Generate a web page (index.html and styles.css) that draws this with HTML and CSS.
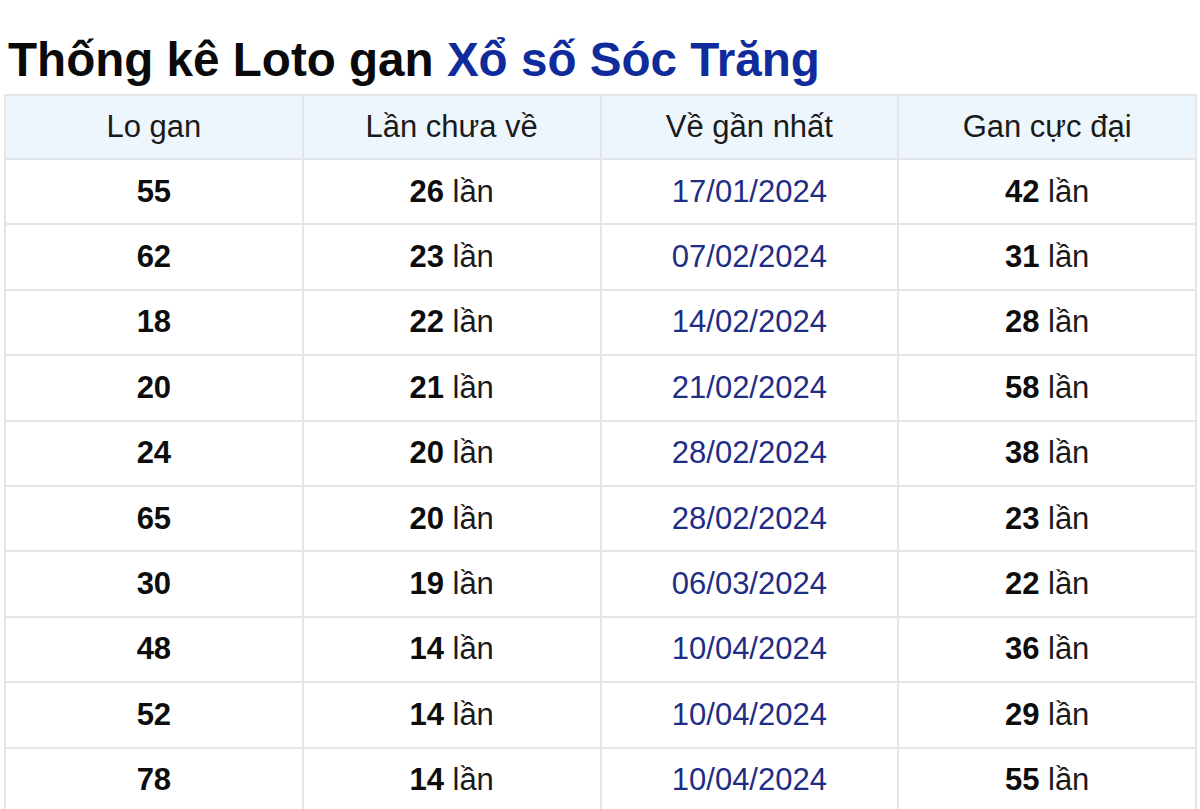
FILE: index.html
```html
<!DOCTYPE html>
<html lang="vi">
<head>
<meta charset="utf-8">
<title>Thống kê Loto gan Xổ số Sóc Trăng</title>
<link rel="stylesheet" href="styles.css">
</head>
<body>
<div class="page">
  <h1 class="title">Thống kê Loto gan <span class="title-blue">Xổ số Sóc Trăng</span></h1>
  <table class="gan-table">
    <thead>
      <tr><th>Lo gan</th><th>Lần chưa về</th><th>Về gần nhất</th><th>Gan cực đại</th></tr>
    </thead>
    <tbody>
      <tr><td><b>55</b></td><td><b>26</b> lần</td><td class="date">17/01/2024</td><td><b>42</b> lần</td></tr>
      <tr><td><b>62</b></td><td><b>23</b> lần</td><td class="date">07/02/2024</td><td><b>31</b> lần</td></tr>
      <tr><td><b>18</b></td><td><b>22</b> lần</td><td class="date">14/02/2024</td><td><b>28</b> lần</td></tr>
      <tr><td><b>20</b></td><td><b>21</b> lần</td><td class="date">21/02/2024</td><td><b>58</b> lần</td></tr>
      <tr><td><b>24</b></td><td><b>20</b> lần</td><td class="date">28/02/2024</td><td><b>38</b> lần</td></tr>
      <tr><td><b>65</b></td><td><b>20</b> lần</td><td class="date">28/02/2024</td><td><b>23</b> lần</td></tr>
      <tr><td><b>30</b></td><td><b>19</b> lần</td><td class="date">06/03/2024</td><td><b>22</b> lần</td></tr>
      <tr><td><b>48</b></td><td><b>14</b> lần</td><td class="date">10/04/2024</td><td><b>36</b> lần</td></tr>
      <tr><td><b>52</b></td><td><b>14</b> lần</td><td class="date">10/04/2024</td><td><b>29</b> lần</td></tr>
      <tr><td><b>78</b></td><td><b>14</b> lần</td><td class="date">10/04/2024</td><td><b>55</b> lần</td></tr>
    </tbody>
  </table>
</div>
</body>
</html>
```

FILE: styles.css
```css
html, body {
  margin: 0;
  padding: 0;
  background: #ffffff;
}
body {
  font-family: "Liberation Sans", Arial, sans-serif;
  color: #111111;
}
.page {
  padding: 32px 4px 0 4px;
}
.title {
  margin: 0 0 6px 4px;
  font-size: 47.6px;
  line-height: 56px;
  font-weight: bold;
  color: #0a0a0a;
  white-space: nowrap;
}
.title-blue {
  color: #0f2b9c;
}
.gan-table {
  width: 1193px;
  border-collapse: collapse;
  table-layout: fixed;
  font-size: 31px;
}
.gan-table th,
.gan-table td {
  border: 2px solid #e3e5e8;
  text-align: center;
  vertical-align: middle;
  padding: 0;
}
.gan-table th {
  background: #eef6fd;
  font-weight: normal;
  color: #1a1a1a;
  height: 62px;
}
.gan-table td {
  height: 63.4px;
  color: #1a1a1a;
}
.gan-table td b {
  font-weight: bold;
  color: #0d0d0d;
}
.gan-table td.date {
  color: #1f2e85;
}
```
